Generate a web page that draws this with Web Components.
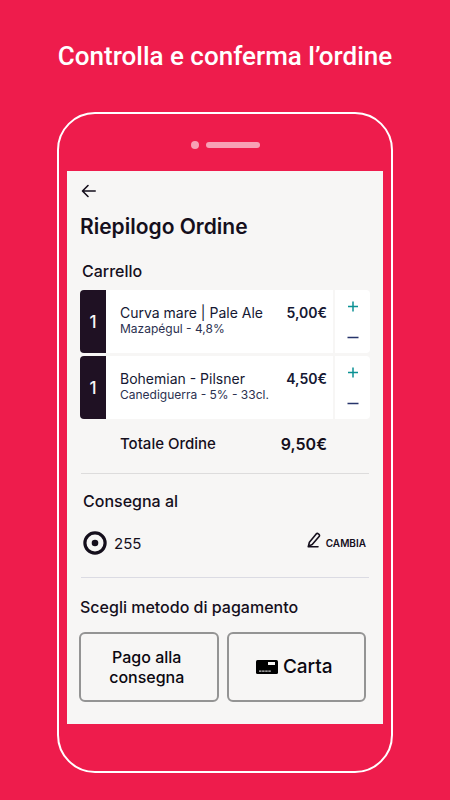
<!DOCTYPE html>
<html lang="it">
<head>
<meta charset="utf-8">
<meta name="viewport" content="width=device-width, initial-scale=1">
<title>Riepilogo Ordine</title>
<style>
  body { margin: 0; background: #ee1c4c; font-family: Inter, "Liberation Sans", sans-serif; color: #150f1c; }
</style>
</head>
<body>
<promo-page>
  <span slot="headline">Controlla e conferma l’ordine</span>
  <phone-frame>
    <order-screen></order-screen>
  </phone-frame>
</promo-page>

<script>
const define = (name, html, setup) => {
  const template = document.createElement('template');
  template.innerHTML = html;
  customElements.define(name, class extends HTMLElement {
    constructor() {
      super();
      this.attachShadow({ mode: 'open' }).append(template.content.cloneNode(true));
    }
    connectedCallback() { if (setup) setup(this, this.shadowRoot); }
  });
};

define('promo-page', `
  <style>
    :host { display: block; box-sizing: border-box; min-height: 100vh; padding: 40px 57px 27px; }
    h1 { margin: 0 -40px 40px; text-align: center; font: 500 26px/32px Roboto, sans-serif; color: #fff; }
  </style>
  <h1><slot name="headline"></slot></h1>
  <slot></slot>`);

define('phone-frame', `
  <style>
    :host { display: block; border: 2px solid #fff; border-radius: 38px; padding: 0 8px 47px; }
    .speaker { display: flex; align-items: center; justify-content: center; gap: 7px; height: 57px; padding-top: 4px; box-sizing: border-box; }
    .dot, .bar { background: #f8a0b5; border-radius: 4px; }
    .dot { width: 8px; height: 8px; }
    .bar { width: 54px; height: 6px; }
  </style>
  <div class="speaker"><span class="dot"></span><span class="bar"></span></div>
  <slot></slot>`);

define('icon-back', `
  <style>:host, svg { display: block; }</style>
  <svg width="16" height="14" viewBox="0 0 16 14" fill="none" stroke="#150f1c" stroke-width="1.6" stroke-linecap="round" stroke-linejoin="round"><path d="M14.2 7H1.6M7 1.5 1.5 7 7 12.5"/></svg>`);

define('icon-place', `
  <style>:host, svg { display: block; }</style>
  <svg width="24" height="24" viewBox="0 0 24 24"><circle cx="12" cy="12" r="10.1" fill="none" stroke="#150f1c" stroke-width="3.2"/><circle cx="12" cy="12" r="3.3" fill="#150f1c"/></svg>`);

define('icon-pencil', `
  <style>:host, svg { display: block; }</style>
  <svg width="14" height="16" viewBox="0 0 14 16" fill="none" stroke="#150f1c" stroke-width="1.6" stroke-linejoin="round" stroke-linecap="round"><path d="M1.2 14.8H11M1.4 14.2 2.4 10.2 9.2 1.9Q10.2.9 11.4 1.9 13.2 3.1 12.1 4.4L5.2 12.5Z"/></svg>`);

define('icon-card', `
  <style>:host, svg { display: block; }</style>
  <svg width="22" height="14" viewBox="0 0 22 14"><rect width="22" height="14" rx="1.5" fill="#000"/><path d="M12 2H19V5H12Z" fill="#f7f6f5"/><path d="M3 11.2H15" stroke="#c8c8c8" stroke-width="1.2" stroke-dasharray="2.5 .6"/></svg>`);

define('cart-item', `
  <style>
    :host { display: grid; grid-template-columns: 26px 1fr 35px; height: 63px; border-radius: 4px; overflow: hidden; background: #fff; }
    .count { display: grid; place-items: center; background: #1f1123; color: #f7f6f5; font-size: 17px; font-weight: 500; }
    .main { display: grid; grid-template-columns: 1fr auto; padding: 14px 6px 0 14px; border-right: 2px solid #f7f6f5; align-content: start; color: #151833; white-space: nowrap; }
    .name { font-size: 14px; line-height: 18px; }
    .price { font-size: 14px; line-height: 18px; font-weight: 600; }
    .detail { grid-column: 1 / -1; font-size: 12px; line-height: 14px; color: #2c3150; }
    .steps { display: grid; grid-template-rows: 1fr 1fr; }
    button { display: grid; place-items: center; border: 0; padding: 0; margin: 0; background: none; }
    svg { display: block; }
  </style>
  <div class="count"></div>
  <div class="main">
    <span class="name"><slot></slot></span><span class="price"></span>
    <span class="detail"></span>
  </div>
  <div class="steps">
    <button type="button" aria-label="Aggiungi"><svg width="12" height="12" viewBox="0 0 12 12" stroke="#0b9194" stroke-width="1.5"><path d="M1 6.5H11M6 1.5V11.5"/></svg></button>
    <button type="button" aria-label="Rimuovi"><svg width="12" height="12" viewBox="0 0 12 12" stroke="#27346b" stroke-width="1.5"><path d="M.5 6.5H11.5"/></svg></button>
  </div>`, (host, root) => {
    for (const key of ['count', 'price', 'detail'])
      root.querySelector('.' + key).textContent = host.getAttribute(key);
  });

define('pay-button', `
  <style>
    :host { display: grid; }
    button { display: flex; align-items: center; justify-content: center; gap: 5px; min-height: 70px; padding: 0 4px 0 0; border: 2px solid #949494; border-radius: 6px; background: none; color: #0b0810; font: inherit; text-align: center; }
  </style>
  <button type="button"><slot></slot></button>`);

define('order-screen', `
  <style>
    :host { display: block; background: #f7f6f5; padding: 10px 13px 22px; }
    .back { display: flex; align-items: center; height: 20px; border: 0; padding: 0 1px; background: none; }
    h2, h3 { margin: 0; }
    h2 { margin-top: 12px; font-size: 21px; line-height: 28px; font-weight: 600; }
    h3 { font-size: 16px; line-height: 20px; font-weight: 500; }
    .cart { margin-top: 20px; padding-left: 2px; }
    .items { display: grid; gap: 3px; margin-top: 9px; }
    .total { display: flex; justify-content: space-between; margin-top: 15px; padding: 0 43px 0 40px; font-size: 15px; line-height: 20px; font-weight: 500; }
    .total b { font-size: 16px; font-weight: 600; }
    hr { border: 0; height: 1px; margin: 19px 1px 17px; background: #dddcdc; }
    .address { display: flex; align-items: center; gap: 7px; margin-top: 20px; padding: 0 4px 0 3px; height: 24px; font-size: 15px; }
    .change { display: flex; align-items: center; gap: 5px; margin-left: auto; border: 0; padding: 0; background: none; color: inherit; font: 600 10px/16px Inter, sans-serif; }
    icon-pencil { padding-bottom: 6px; }
    .ship { padding-left: 3px; }
    hr.low { margin: 22px 1px 19px; background: #dbdbe3; }
    .pay { display: grid; grid-template-columns: 1fr 1fr; gap: 8px; margin: 15px 4px 0 -1px; }
    .cash { font-size: 16px; line-height: 20px; font-weight: 500; }
    .card { font-size: 19px; line-height: 24px; font-weight: 500; }
  </style>
  <button class="back" type="button" aria-label="Indietro"><icon-back></icon-back></button>
  <h2>Riepilogo Ordine</h2>
  <h3 class="cart">Carrello</h3>
  <div class="items">
    <cart-item count="1" price="5,00€" detail="Mazapégul - 4,8%">Curva mare | Pale Ale</cart-item>
    <cart-item count="1" price="4,50€" detail="Canediguerra - 5% - 33cl.">Bohemian - Pilsner</cart-item>
  </div>
  <div class="total"><span>Totale Ordine</span><b>9,50€</b></div>
  <hr>
  <h3 class="ship">Consegna al</h3>
  <div class="address">
    <icon-place></icon-place><span>255</span>
    <button class="change" type="button"><icon-pencil></icon-pencil>CAMBIA</button>
  </div>
  <hr class="low">
  <h3>Scegli metodo di pagamento</h3>
  <div class="pay">
    <pay-button class="cash"><span>Pago alla<br>consegna</span></pay-button>
    <pay-button class="card"><icon-card></icon-card><span>Carta</span></pay-button>
  </div>`);
</script>
</body>
</html>
